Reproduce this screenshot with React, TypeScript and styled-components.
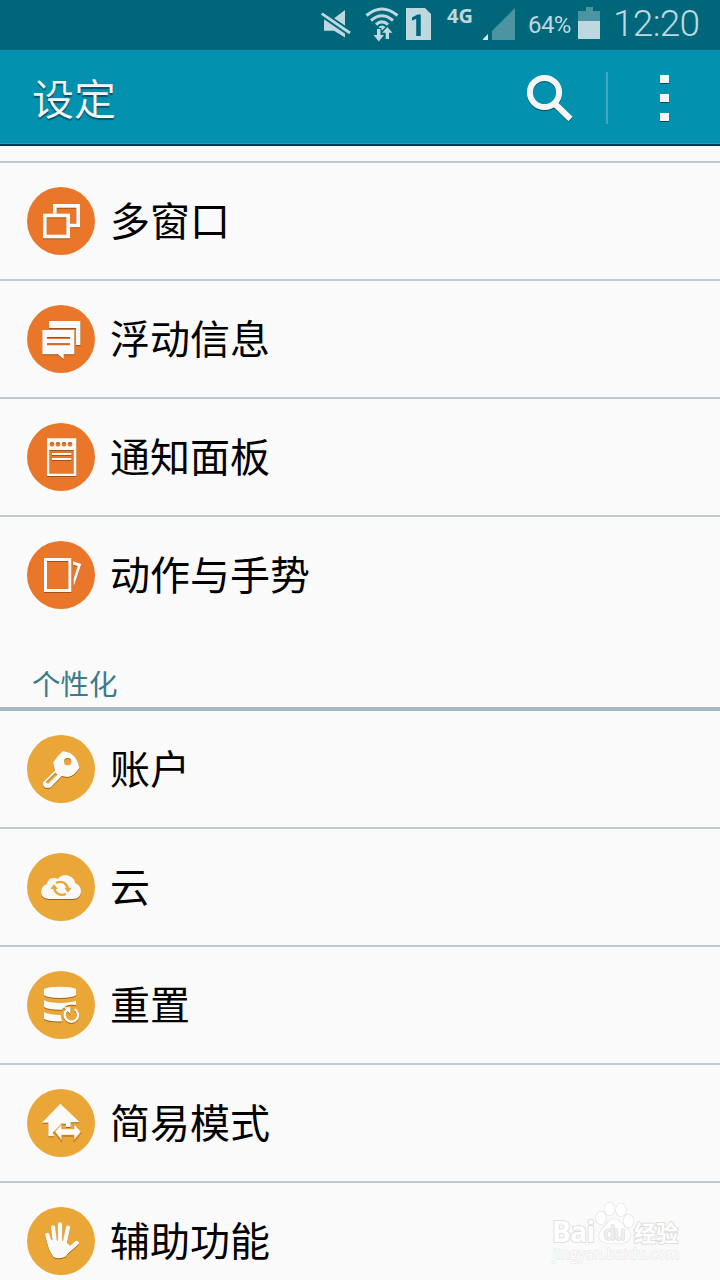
import React from "react";
import styled, { createGlobalStyle } from "styled-components";

const GlobalStyle = createGlobalStyle`
  * { box-sizing: border-box; }
  html, body { margin: 0; padding: 0; background: #fafafa; }
  body { font-family: Roboto, "Noto Sans CJK SC", sans-serif; }
`;

const Screen = styled.div`
  position: relative;
  width: 720px;
  height: 1280px;
  overflow: hidden;
  background: #fafafa;
  display: flex;
  flex-direction: column;
`;

const StatusBar = styled.div`
  height: 50px;
  flex: none;
  display: flex;
  align-items: flex-start;
  padding-left: 320px;
  background: #00677b;
  color: #bdd8de;
`;

const StatusIcons = styled.svg`
  flex: none;
  display: block;
`;

const Network = styled.span`
  width: 28px;
  margin: 5px 8px 0 16px;
  font: 700 20px/22px "Open Sans", sans-serif;
`;

const Percent = styled.span`
  width: 44px;
  margin: 10px 6px 0 12px;
  font: 400 24px/30px Roboto, sans-serif;
  letter-spacing: -0.6px;
`;

const Clock = styled.span`
  margin: 3px 0 0 13px;
  font: 300 37px/42px Roboto, sans-serif;
  letter-spacing: -0.7px;
  white-space: nowrap;
`;

const ActionBar = styled.header`
  height: 96px;
  flex: none;
  display: flex;
  align-items: center;
  padding-left: 33px;
  background: #0292af;
  border-bottom: 2px solid #023951;
  box-shadow: inset 0 -1px #24a2bb;
`;

const Title = styled.h1`
  flex: 1;
  margin: 0 0 0 -1px;
  padding-bottom: 1px;
  font: 350 42px/60px "Noto Sans CJK SC", sans-serif;
  color: #f5f5f5;
  text-shadow: 0 2px 1px rgba(0, 50, 65, 0.65);
`;

const IconButton = styled.button<{ $width: number }>`
  width: ${(p) => p.$width}px;
  height: 94px;
  padding: 0;
  border: 0;
  background: none;
`;

const Divider = styled.div`
  width: 2px;
  height: 52px;
  margin-top: 2px;
  background: #3eaac1;
`;

const List = styled.ul<{ $first?: boolean }>`
  list-style: none;
  flex: none;
  margin: ${(p) => (p.$first ? "15px 0 0" : "0")};
  padding: 0;
  border-top: ${(p) => (p.$first ? "2px solid #c0cad3" : "0")};
`;

const Row = styled.li`
  height: 118px;
  display: flex;
  align-items: center;
  padding-left: 27px;
  border-bottom: 2px solid #c0cad3;
  &:last-child { border-bottom-color: transparent; }
`;

const Badge = styled.span<{ $color: string }>`
  width: 68px;
  height: 68px;
  flex: none;
  border-radius: 50%;
  background: ${(p) => p.$color};
`;

const Glyph = styled.svg`
  display: block;
  width: 68px;
  height: 68px;
  filter: drop-shadow(0.6px 1.2px 0.4px rgba(110, 60, 10, 0.6));
`;

const Label = styled.span`
  margin-left: 15px;
  padding-bottom: 4px;
  font: 400 40px/58px "Noto Sans CJK SC", sans-serif;
  color: #000;
  white-space: nowrap;
`;

const SectionTitle = styled.h2`
  flex: none;
  height: 76px;
  margin: 0;
  padding: 27px 0 0 32px;
  border-bottom: 4px solid #a2bac1;
  font: 400 28.5px/41px "Noto Sans CJK SC", sans-serif;
  color: #3c7b89;
`;

const Watermark = styled.div`
  position: absolute;
  left: 551px;
  top: 1200px;
`;

const WatermarkArt = styled.svg`
  display: block;
`;

const ORANGE = "#e97629";
const AMBER = "#eaa636";
const W = "#fafafa";

const glyphs = {
  windows: (
    <g fill="none" stroke={W} strokeWidth="11">
      <path d="M83.5 80V56.5h70v59H129" />
      <rect x="53.5" y="85.5" width="70" height="63" />
    </g>
  ),
  chat: (
    <g fill={W}>
      <path d="M66 48h94v72h-13V69H66z" />
      <path fillRule="evenodd" d="M46 75h96v73h-32v15l-17-15H46zM60 96v6h69v-6zM60 115v6h69v-6z" />
    </g>
  ),
  notebook: (
    <g fill={W}>
      <path
        fillRule="evenodd"
        d="M60 46h88v113H60zM67 81v71h73V81zM68 64a7 7 0 1 0 14 0a7 7 0 1 0-14 0M86 64a7 7 0 1 0 14 0a7 7 0 1 0-14 0M104 64a7 7 0 1 0 14 0a7 7 0 1 0-14 0M122 64a7 7 0 1 0 14 0a7 7 0 1 0-14 0"
      />
      <path d="M75 90h58v6H75zM75 105h58v6H75z" />
    </g>
  ),
  motion: (
    <g fill={W}>
      <path fillRule="evenodd" d="M51 51h82v102H51zM60 60v84h64V60z" />
      <path d="M138 61l25 8-23 68v-24l12-38-14-4z" />
    </g>
  ),
  key: (
    <path
      fill={W}
      fillRule="evenodd"
      d="M108 48L127 53Q150 64 157 98Q145 121 122 126L104 123L70 158H54L48 151V142L84 107L78 83Q92 61 108 48zM111 80a11 11 0 1 0 22 0a11 11 0 1 0-22 0M57 141l6 6 28-28-6-6z"
    />
  ),
  cloud: (
    <g>
      <path
        fill={W}
        d="M66 138Q42 136 42 117Q43 99 60 93Q62 75 80 75Q88 74 93 78Q101 66 117 66Q140 69 145 91Q162 98 162 116Q160 137 138 138z"
      />
      <g fill="none" stroke={AMBER} strokeWidth="7">
        <path d="M87 90Q99 83 112 90Q121 96 122 106" />
        <path d="M117 122Q105 129 93 122Q83 116 82 106" />
      </g>
      <path fill={AMBER} d="M112 104h22l-11 15zM70 108l11-14 12 14z" />
    </g>
  ),
  reset: (
    <g fill={W}>
      <path d="M51 54Q64 47 99 47Q134 47 147 54V73Q134 81 99 81Q64 81 51 73z" />
      <path d="M51 88Q68 96 100 96Q130 95 147 89V102Q128 99 117 105Q109 110 105 116Q66 117 51 108z" />
      <path d="M51 124Q70 132 102 132Q101 141 106 151Q66 153 51 144z" />
      <path d="M143 115A20 20 0 1 1 120 117" fill="none" stroke={W} strokeWidth="7" />
      <path d="M110 109h20v20z" />
    </g>
  ),
  home: (
    <g fill={W}>
      <path d="M100 44L158 100H131V114H117V104H105L77 132L82 142H64V101H45z" />
      <path
        d="M85 128l18-21v14h39v-14l19 21-19 23v-14h-39v14z"
        stroke={AMBER}
        strokeWidth="5"
        paintOrder="stroke"
      />
    </g>
  ),
  hand: (
    <g fill={W} stroke={W} strokeLinecap="round" strokeLinejoin="round">
      <path d="M63 98L70 126L82 147Q98 153 114 145L130 123L113 107L77 104z" strokeWidth="8" />
      <path d="M61 84L70 116M78 61L84 108M99 52V108M123 62L113 109" fill="none" strokeWidth="13" />
      <path d="M149 108L119 134" fill="none" strokeWidth="13" />
    </g>
  ),
};

type GlyphName = keyof typeof glyphs;
type Item = { label: string; glyph: GlyphName };

const deviceItems: Item[] = [
  { label: "多窗口", glyph: "windows" },
  { label: "浮动信息", glyph: "chat" },
  { label: "通知面板", glyph: "notebook" },
  { label: "动作与手势", glyph: "motion" },
];

const personalItems: Item[] = [
  { label: "账户", glyph: "key" },
  { label: "云", glyph: "cloud" },
  { label: "重置", glyph: "reset" },
  { label: "简易模式", glyph: "home" },
  { label: "辅助功能", glyph: "hand" },
];

function SettingsRow({ item, color }: { item: Item; color: string }) {
  return (
    <Row>
      <Badge $color={color}>
        <Glyph viewBox="0 0 204 204">{glyphs[item.glyph]}</Glyph>
      </Badge>
      <Label>{item.label}</Label>
    </Row>
  );
}

function Status() {
  return (
    <StatusBar>
      <StatusIcons width="111" height="50" viewBox="0 0 111 50" fill="#bdd8de">
        <path d="M4 19.5h8.500L25 10v27.500L14 30.800H4z" />
        <path d="M0 12.500L31 33.700" stroke="#00677b" strokeWidth="6.500" />
        <path d="M1.800 13.700L30 33" stroke="#bdd8de" strokeWidth="2.800" />
        <g fill="none" stroke="#bdd8de" strokeWidth="3">
          <path d="M46.500 15.500Q62 2.500 77.500 15.500" />
          <path d="M51 20.500Q62 11 73 20.500" />
          <path d="M56 24.700Q62 19 68 24.700" />
        </g>
        <path d="M58.500 27Q62 24 65.500 27L62 30.500z" />
        <path
          d="M57 29h3.500v6H64L58.800 41.500 53.500 35H57zM65.700 39v-6.300h-3.500L67.300 27l5.200 5.700h-3.500V39z"
          stroke="#00677b"
          strokeWidth="2"
          paintOrder="stroke"
        />
        <path d="M86 8h19l6 6v26H86z" />
        <path d="M92 17.500l5.500-3h3.300V36h-4.600V18.700L92 20.700z" fill="#00677b" />
      </StatusIcons>
      <Network>4G</Network>
      <StatusIcons width="33" height="50" viewBox="0 0 33 50">
        <path d="M-1 40l6-6v6z" fill="#d3e7eb" />
        <path d="M9 40V31L32 8v32z" fill="#4d94a2" />
      </StatusIcons>
      <Percent>64%</Percent>
      <StatusIcons width="22" height="50" viewBox="0 0 22 50">
        <path d="M0 11h8V7h7v4h7v10H0z" fill="#4d94a2" />
        <path d="M0 21h22v18H0z" fill="#bdd8de" />
      </StatusIcons>
      <Clock>12:20</Clock>
    </StatusBar>
  );
}

export default function App() {
  return (
    <Screen>
      <GlobalStyle />
      <Status />
      <ActionBar>
        <Title>设定</Title>
        <IconButton $width={92} aria-label="搜索">
          <svg width="92" height="94" viewBox="0 0 92 94" fill="none">
            <g stroke="#064c5d" strokeOpacity=".75" transform="translate(0 1.2)">
              <circle cx="30.500" cy="42.500" r="14.600" strokeWidth="6" />
              <path d="M41 54L56.500 69" strokeWidth="6" />
            </g>
            <g stroke="#f5f5f5">
              <circle cx="30.500" cy="42.500" r="14.600" strokeWidth="6" />
              <path d="M41 54L56.500 69" strokeWidth="6" />
            </g>
          </svg>
        </IconButton>
        <Divider />
        <IconButton $width={112} aria-label="更多">
          <svg width="112" height="94" viewBox="0 0 112 94">
            <path d="M52 26h9v8h-9zM52 45h9v8h-9zM52 64h9v8h-9z" fill="#064c5d" />
            <path d="M52 25h9v8h-9zM52 44h9v8h-9zM52 63h9v8h-9z" fill="#f5f5f5" />
          </svg>
        </IconButton>
      </ActionBar>
      <List $first>
        {deviceItems.map((item) => (
          <SettingsRow key={item.label} item={item} color={ORANGE} />
        ))}
      </List>
      <SectionTitle>个性化</SectionTitle>
      <List>
        {personalItems.map((item) => (
          <SettingsRow key={item.label} item={item} color={AMBER} />
        ))}
      </List>
      <Watermark>
        <WatermarkArt
          width="140"
          height="70"
          viewBox="0 0 140 70"
          fill="#fff"
          stroke="#e0e0e0"
          strokeWidth="2"
          paintOrder="stroke"
        >
          <text x="1" y="42" fontFamily="Open Sans" fontWeight="700" fontSize="28" textLength="43">Bai</text>
          <g strokeWidth="1.200">
            <ellipse cx="50" cy="18" rx="5" ry="6.500" />
            <ellipse cx="58.500" cy="9" rx="5" ry="6.500" />
            <ellipse cx="70" cy="10" rx="5" ry="6.500" />
            <ellipse cx="77.500" cy="21" rx="5" ry="6.500" />
            <path d="M63 19Q68 19 73 26Q80 32 79.500 36Q78 43 70 43H56Q48 42 48 35Q49 31 55 25Q59 19 63 19z" />
          </g>
          <text x="52.500" y="40" fontFamily="Open Sans" fontWeight="600" fontSize="19" textLength="22" fill="#f0f0f0" stroke="#d8d8d8" strokeWidth="1.200">du</text>
          <text x="83" y="41" fontFamily="Noto Sans CJK SC" fontWeight="700" fontSize="22" textLength="44">经验</text>
          <text x="2" y="59" fontFamily="Open Sans" fontSize="14" textLength="126" strokeWidth="1.300" stroke="#e8e8e8">jingyan.baidu.com</text>
        </WatermarkArt>
      </Watermark>
    </Screen>
  );
}
